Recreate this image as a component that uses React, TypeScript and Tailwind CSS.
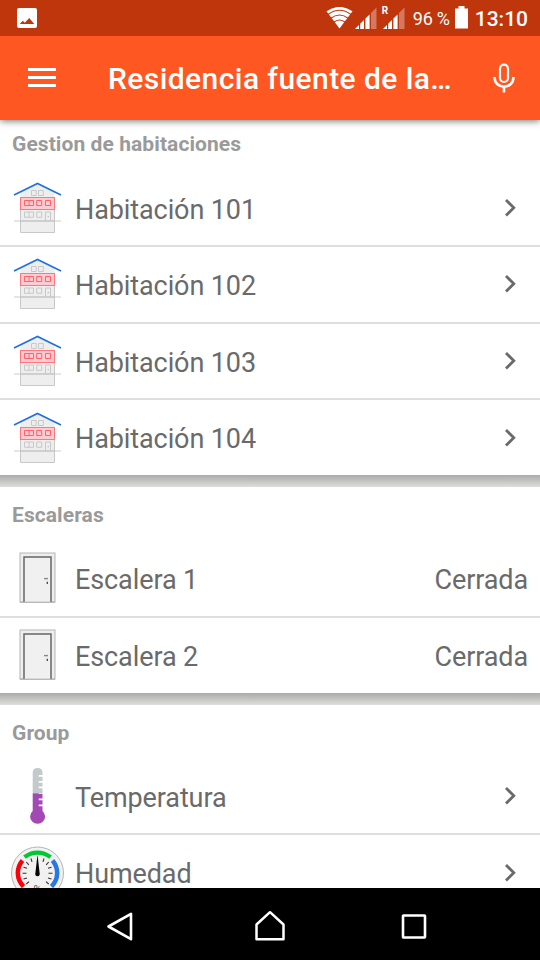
import type { ReactNode } from 'react';

function HouseIcon() {
  return (
    <svg className="h-[76px] w-[75px] shrink-0" viewBox="0 0 75 76" fill="none">
      <path d="M20.5 27V22.5L37.5 14.5L54.5 22.5V27Z" fill="#eee" />
      <path d="M20.5 39.5H54.5V62.5H20.5Z" fill="#eee" stroke="#c8c8c8" />
      <path d="M14 51H20M55 51H61" stroke="#ccc" strokeWidth="1.2" />
      <path d="M20 51H55" stroke="#c4c4c4" strokeWidth="1.4" />
      <path d="M31.5 20.5H36.2V25.5H31.5ZM38.5 20.5H43.3V25.5H38.5Z" stroke="#c8c8c8" />
      <path d="M24.5 42H33.5V47.3H24.5ZM29 42V47.3M36.7 42H41.7V47.3H36.7ZM45.5 51V42H50.5V51" stroke="#c8c8c8" />
      <rect x="47.7" y="46" width="1.2" height="1.2" fill="#bbb" />
      <rect x="20.5" y="27.5" width="34" height="12" fill="#ffcbd0" stroke="#ff777c" />
      <path d="M24.5 30.5H33.5V35.5H24.5ZM29 30.5V35.5M36.7 30.5H41.7V35.5H36.7ZM45.5 30.5H50.5V35.5H45.5Z" stroke="#ff6268" />
      <path d="M14 25L37.5 13.5L61 25" stroke="#2071df" strokeWidth="1.7" />
    </svg>
  );
}

function DoorIcon() {
  return (
    <svg className="h-[76px] w-[75px] shrink-0" viewBox="0 0 75 76" fill="none">
      <rect x="20" y="13" width="35" height="49" fill="#eeeeee" stroke="#b5b5b5" />
      <path d="M24 62V17H51V62" fill="#f0f0f0" stroke="#656565" strokeWidth="1.5" />
      <path d="M20 62.2H55" stroke="#aaa" />
      <path d="M44 38.6H48" stroke="#888" strokeWidth="1.4" />
      <path d="M47.3 41.8V44" stroke="#444" strokeWidth="1.3" />
    </svg>
  );
}

function ThermometerIcon() {
  return (
    <svg className="h-[76px] w-[75px] shrink-0" viewBox="0 0 75 76" fill="none">
      <path d="M32.7 35V15Q32.7 10 37.6 10Q42.5 10 42.5 15V35Z" fill="#c4cacc" />
      <path d="M32.7 35.2H42.5V53A7.5 7.3 0 1 1 32.7 53Z" fill="#a349b4" />
      <path d="M38.7 17.8H43M38.7 23.8H43M38.7 29.4H43M38.7 41.3H43M38.7 47.3H43" stroke="#fff" strokeWidth="1.8" />
      <path d="M38.7 35.5H43" stroke="#e9dfec" strokeWidth="1" />
    </svg>
  );
}

function GaugeIcon() {
  return (
    <svg className="h-[76px] w-[75px] shrink-0" viewBox="0 0 75 76" fill="none">
      <circle cx="37.5" cy="38" r="26" fill="#f1f1f1" stroke="#b6b6b6" />
      <path d="M24.5 22.2A20.5 20.5 0 0 1 50.5 22.2" stroke="#00c832" strokeWidth="4.2" />
      <path d="M22.5 25.5A19 19 0 0 0 23.5 51.5" stroke="#f8000c" strokeWidth="4.5" />
      <path d="M52.5 25.5A19 19 0 0 1 51.5 51.5" stroke="#2878e4" strokeWidth="4.5" />
      <path d="M31 23.5L32 26.8M44 23.5L43 26.8M26.3 27L28.8 29.8M48.7 27L46.2 29.8M23.5 32.3L27 33.3M51.5 32.3L48 33.3M22.5 38.2H26.5M48.5 38.2H52.5M23.5 44L27 43M51.5 44L48 43M26.3 49L29 46.6M48.7 49L46 46.6" stroke="#333" strokeWidth="1.1" />
      <path d="M37.5 19.5L39.6 38A2.3 2.3 0 1 1 35.4 38Z" fill="#050505" />
      <text x="37.5" y="58" textAnchor="middle" fontFamily="Roboto, sans-serif" fontSize="11" fill="#555">%</text>
    </svg>
  );
}

function Chevron() {
  return (
    <svg className="mr-4 h-[22px] w-[22px]" viewBox="0 0 22 22" fill="none">
      <path d="M4 3L11.8 10.8L4 18.6" stroke="#6a6a6a" strokeWidth="2.8" />
    </svg>
  );
}

function Row({ icon, label, value, last = false }: { icon: ReactNode; label: string; value?: string; last?: boolean }) {
  return (
    <div className={`flex items-center ${last ? 'h-[75px]' : 'h-[76.5px] border-b-2 border-[#dedede]'}`}>
      {icon}
      <span className="flex-1 pt-[3.5px] text-[27px] leading-8 tracking-[-0.1px]">{label}</span>
      {value ? <span className="mr-3 pt-[3.5px] text-[27px] leading-8 tracking-[-0.12px]">{value}</span> : <Chevron />}
    </div>
  );
}

function Section({ title, first = false, children }: { title: string; first?: boolean; children: ReactNode }) {
  return (
    <section className="shrink-0 bg-white">
      <h2 className={`px-3 text-[21px] leading-6 font-bold tracking-[0.08px] text-[#9a9a9a] ${first ? 'h-[50.5px] pt-[12px]' : 'h-[54px] pt-[16px]'}`}>{title}</h2>
      {children}
    </section>
  );
}

function Gap() {
  return <div className="h-3 shrink-0 bg-linear-to-b from-[#aaaca9] to-[#dededc]" />;
}

function Signal() {
  return (
    <svg className="h-[22px] w-[22px] shrink-0" viewBox="0 0 22 22">
      <path d="M0 22L4 18V22ZM5.2 16.8L9 13V22H5.2ZM10.4 11.6L14.6 7.4V22H10.4Z" fill="#fff" />
      <path d="M16 6L21.5 .5V22H16Z" fill="#d6785d" />
    </svg>
  );
}

export default function App() {
  return (
    <div className="flex h-[960px] w-[540px] flex-col overflow-hidden bg-white font-['Roboto',sans-serif] text-[#6a6a6a]">
      <header className="relative z-10 shrink-0 text-white shadow-[0_1px_7px_rgba(0,0,0,0.55)]">
        <div className="flex h-9 items-center bg-[#bf360c] pl-[17px]">
          <svg className="h-5 w-5" viewBox="0 0 20 20">
            <rect width="20" height="20" rx="2" fill="#fff" />
            <path d="M2.7 16L5.8 12.8L7.8 14.8L12.2 10L17.3 16Z" fill="#bf360c" />
          </svg>
          <div className="ml-auto flex h-9 items-start">
            <svg className="mt-[7px] h-[22px] w-[27px]" viewBox="0 0 27 22">
              <path d="M.5 4.2Q13.5 -4.5 26.5 4.2L13.5 21.5Z" fill="#fff" />
              <path d="M2 7.5Q13.5 -1 25 7.5M4.5 11.5Q13.5 4.5 22.5 11.5M7.5 15.5Q13.5 10.5 19.5 15.5" fill="none" stroke="#bf360c" strokeWidth="1.2" />
            </svg>
            <span className="mt-[7px] ml-[2px]"><Signal /></span>
            <span className="relative mt-[7px] ml-[6px]">
              <Signal />
              <span className="absolute -top-[2px] -left-[1px] text-[10px] leading-3 font-bold">R</span>
            </span>
            <span className="mt-[7px] ml-[8px] w-[38px] text-[18px] leading-6 tracking-[-0.2px] whitespace-nowrap">96 %</span>
            <svg className="mt-[6px] ml-[3px] h-[23px] w-[15px]" viewBox="0 0 15 23">
              <path d="M4.5 0H10.5V2.5H14V22.5H1V2.5H4.5Z" fill="#fff" />
            </svg>
            <span className="mt-[7px] mr-3 ml-[6px] text-[21px] leading-6 font-medium">13:10</span>
          </div>
        </div>
        <div className="flex h-[84px] items-center bg-[#ff5722] pl-7">
          <svg className="h-5 w-7" viewBox="0 0 28 20"><path d="M0 1.5H28M0 9.5H28M0 17.5H28" stroke="#fff" strokeWidth="3" /></svg>
          <h1 className="ml-[52px] w-[344px] pt-[2px] text-[30px] leading-9 font-medium tracking-[0.43px] whitespace-nowrap">Residencia fuente de la…</h1>
          <svg className="ml-[41px] h-[30px] w-[22px]" viewBox="0 0 22 30" fill="none" stroke="#fff">
            <rect x="7" y="1.7" width="8" height="17.3" rx="4" strokeWidth="2.2" />
            <path d="M1.5 14C1.5 27 20.5 27 20.5 14M11 23.5V29.5" strokeWidth="2.6" />
          </svg>
        </div>
      </header>
      <main className="flex h-[768px] flex-col overflow-hidden">
        <Section title="Gestion de habitaciones" first>
          <Row icon={<HouseIcon />} label="Habitación 101" />
          <Row icon={<HouseIcon />} label="Habitación 102" />
          <Row icon={<HouseIcon />} label="Habitación 103" />
          <Row icon={<HouseIcon />} label="Habitación 104" last />
        </Section>
        <Gap />
        <Section title="Escaleras">
          <Row icon={<DoorIcon />} label="Escalera 1" value="Cerrada" />
          <Row icon={<DoorIcon />} label="Escalera 2" value="Cerrada" last />
        </Section>
        <Gap />
        <Section title="Group">
          <Row icon={<ThermometerIcon />} label="Temperatura" />
          <Row icon={<GaugeIcon />} label="Humedad" last />
        </Section>
      </main>
      <nav className="flex h-[72px] shrink-0 items-center bg-black pt-1">
        <svg className="ml-[106px] h-8 w-8" viewBox="0 0 32 32"><path d="M2.5 16.5L25 3.8V29.2Z" fill="none" stroke="#fff" strokeWidth="2.6" strokeLinejoin="round" /></svg>
        <svg className="ml-[115px] h-8 w-8" viewBox="0 0 32 32"><path d="M3.5 29.2V14.5L17 2.2L30.5 14.5V29.2Z" fill="none" stroke="#fff" strokeWidth="2.5" strokeLinejoin="round" /></svg>
        <svg className="ml-[115px] h-8 w-8" viewBox="0 0 32 32"><rect x="3" y="5.5" width="22" height="22" rx=".5" fill="none" stroke="#fff" strokeWidth="2.6" /></svg>
      </nav>
    </div>
  );
}
